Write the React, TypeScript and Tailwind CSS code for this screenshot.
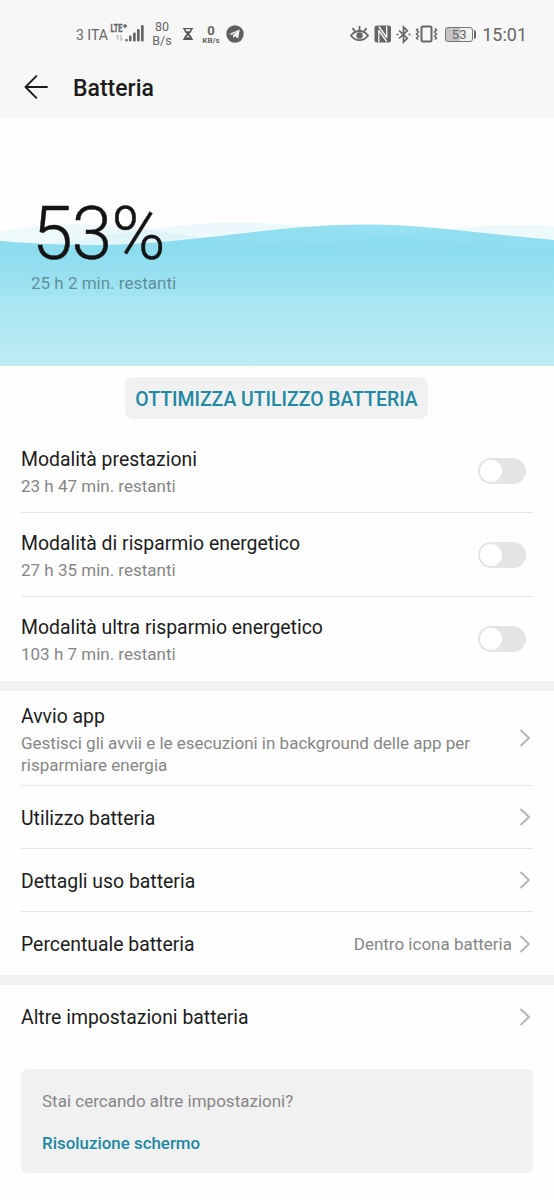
import React, { useState } from "react"

const StatusBar = () => {
  return (
    <div className="flex h-[58px] items-start justify-between pl-[76px] pr-[27px] text-[#666]">
      <div className="flex h-[58px] items-center pt-[10px]">
        <span className="w-[34px] whitespace-nowrap pt-px text-[14px] leading-none">3 ITA</span>
        <svg width="34" height="22" viewBox="0 0 34 22" className="-mt-[3px]" fill="#666">
          <path d="M13 4h4.200M15.100 1.900v4.200" stroke="#666" strokeWidth="1.400" />
          <text x="0.500" y="9.500" fontSize="10" fontWeight="700" fontFamily="Roboto, sans-serif" stroke="#666" strokeWidth="0.300" textLength="12" lengthAdjust="spacingAndGlyphs">
            LTE
          </text>
          <path d="M8 13v5M6.500 14.500L8 13M11 13v5l1.500-1.500" stroke="#bbb" strokeWidth="1.200" fill="none" />
          <rect x="15.300" y="17" width="2.500" height="2.500" rx="1" />
          <rect x="19" y="13.500" width="2.500" height="6" rx="1" />
          <rect x="23" y="10.500" width="2.700" height="9" rx="1" />
          <rect x="27" y="7" width="2.700" height="12.500" rx="1" />
          <rect x="31" y="3" width="2.700" height="16.500" rx="1" />
        </svg>
        <div className="ml-2 w-[20px] text-center text-[12.500px] leading-[14px]">
          <div>80</div>
          <div>B/s</div>
        </div>
        <svg width="10" height="12" viewBox="0 0 10 12" className="ml-[11px]" fill="#555">
          <path d="M0 0h10v1.300H9C9 4 7 5 6 6c1 1 3 2 3 4.700h1V12H0v-1.300h1C1 8 3 7 4 6 3 5 1 4 1 1.300H0z" />
          <path d="M2.300 1.300h5.400L6.800 3.300H3.200zM5 7.400L7 9.300H3z" fill="#f7f7f7" />
        </svg>
        <div className="ml-[8px] flex w-[20px] flex-col items-center font-bold">
          <span className="text-[13px] leading-[13px]">0</span>
          <span className="text-[8px] leading-[8px]">KB/s</span>
        </div>
        <svg width="18" height="18" viewBox="0 0 18 18" className="ml-[5px]">
          <circle cx="9" cy="9" r="8.700" fill="#5f5f5f" />
          <path d="M3.300 8.900L13.800 4.600 12.100 13.600 9 11.300 7.400 13 7 10.300 11.600 6.300 6 9.800z" fill="#f7f7f7" />
        </svg>
      </div>
      <div className="flex h-[58px] items-center pt-[10px]">
        <svg width="19" height="18" viewBox="0 0 19 18" fill="none" stroke="#666" strokeWidth="1.800">
          <path d="M1 10.500C4 6.800 7 6 9.500 6s5.500.8 8.500 4.500c-2.500 3.500-5.500 4.700-8.500 4.700S3.500 14 1 10.500z" />
          <path d="M9.500 1v4M2.500 3l2.500 3.500M16.500 3L14 6.500" />
          <circle cx="9.500" cy="10.500" r="3.200" fill="#666" stroke="none" />
        </svg>
        <svg width="18" height="18" viewBox="0 0 18 18" className="ml-[5px]">
          <rect x="0.500" y="0.500" width="16.500" height="17" rx="2.500" fill="#666" />
          <path d="M4.800 17V5M12.700 13V1" fill="none" stroke="#f7f7f7" strokeWidth="1.300" />
          <path d="M4.800 1.500L12.700 12.500M4.800 5.500L12.700 16.500" stroke="#f7f7f7" strokeWidth="1.300" />
        </svg>
        <svg width="15" height="19" viewBox="0 0 15 19" className="ml-[4px]" fill="none" stroke="#666" strokeWidth="1.700">
          <path d="M3 5.500l8.300 7.700L7.500 17V2l3.800 3.800L3 13.500" />
          <path d="M0.500 9.500h2M12.500 9.500h2" />
        </svg>
        <svg width="23" height="18" viewBox="0 0 23 18" className="ml-[4px]" fill="none" stroke="#666">
          <rect x="6.500" y="1.500" width="10" height="15" rx="1.500" strokeWidth="2" />
          <path d="M3 3.500L1.500 5 3.500 7 1.500 9l2 2-2 2L3 14.500M20 3.500L21.500 5l-2 2 2 2-2 2 2 2-1.500 1.500" strokeWidth="1.500" />
        </svg>
        <div className="ml-[7px] flex h-[15px] w-[28px] items-center justify-center rounded-[3px] border border-[#777] bg-linear-to-r from-[#c4c4c4] from-53% to-[#f0f0f0] to-53% text-[13px] leading-none">
          53
        </div>
        <div className="ml-px h-[9px] w-[2px] rounded-r-sm bg-[#666]" />
        <span className="ml-[6px] pt-px text-[18px] leading-none">15:01</span>
      </div>
    </div>
  )
}

const Header = () => {
  return (
    <div className="h-[118px] bg-[#f7f7f7]">
      <StatusBar />
      <div className="flex h-[60px] items-center pl-6">
        <svg width="25" height="24" viewBox="0 0 25 24" className="-mt-[2px]" fill="none" stroke="#1a1a1a" strokeWidth="1.900" strokeLinecap="round" strokeLinejoin="round">
          <path d="M1.500 12H23M12.300 1.200L1.500 12l10.800 10.800" />
        </svg>
        <h1 className="ml-6 text-[23px] font-medium leading-none">Batteria</h1>
      </div>
    </div>
  )
}

const BatteryLevel = () => {
  return (
    <div className="relative h-[248px] overflow-hidden">
      <svg className="absolute inset-0" width="554" height="248" viewBox="0 118 554 248">
        <defs>
          <linearGradient id="water" gradientUnits="userSpaceOnUse" x1="0" y1="224" x2="0" y2="366">
            <stop offset="0" stopColor="#98e1f2" />
            <stop offset="0.180" stopColor="#92dff0" />
            <stop offset="1" stopColor="#c0edf4" />
          </linearGradient>
          <linearGradient id="swell" gradientUnits="userSpaceOnUse" x1="0" y1="224" x2="0" y2="300">
            <stop offset="0" stopColor="#6fd0e0" stopOpacity="0.130" />
            <stop offset="0.300" stopColor="#6fd0e8" stopOpacity="0.100" />
            <stop offset="1" stopColor="#6fd0e8" stopOpacity="0" />
          </linearGradient>
        </defs>
        <path d="M0 240.700C30 243.500 60 245 93 245C190 245 270 224.500 365 224.500C430 224.500 490 235 554 240V366H0z" fill="url(#water)" />
        <path d="M0 231.500C25 227 52 224.500 80 224.500C150 224.500 215 245 290 245C370 245 440 225 515 225C530 225 542 225.500 554 226.500V366H0z" fill="url(#swell)" />
        <path d="M0 246C80 246 150 222.500 235 222.500C330 222.500 430 248 554 248V366H0z" fill="url(#swell)" />
      </svg>
      <div className="relative pl-[31px] pt-[79px]">
        <div className="pl-px text-[73.500px] font-light leading-[74px] tracking-[-1.200px] text-[#141414] [-webkit-text-stroke:0.400px_#141414]">53%</div>
        <div className="mt-[2px] text-[17px] leading-5 text-[#5f9099]">25 h 2 min. restanti</div>
      </div>
    </div>
  )
}

const Toggle = ({ on, onClick }: { on: boolean; onClick: () => void }) => {
  return (
    <button
      role="switch"
      aria-checked={on}
      onClick={onClick}
      className={`mr-[7px] flex h-[26px] w-12 items-center rounded-full px-[2px] ${on ? "justify-end bg-[#1f86a0]" : "bg-[#e4e4e4]"}`}
    >
      <span className="size-[22px] rounded-full bg-white" />
    </button>
  )
}

const Chevron = () => (
  <svg width="12" height="18" viewBox="0 0 12 18" className="mr-[2px] shrink-0" fill="none" stroke="#b3b3b3" strokeWidth="1.800">
    <path d="M1.500 1L10 9l-8.500 8" />
  </svg>
)

const modes = [
  { title: "Modalità prestazioni", left: "23 h 47 min. restanti" },
  { title: "Modalità di risparmio energetico", left: "27 h 35 min. restanti" },
  { title: "Modalità ultra risparmio energetico", left: "103 h 7 min. restanti" },
]

const links = [
  { title: "Utilizzo batteria", value: "" },
  { title: "Dettagli uso batteria", value: "" },
  { title: "Percentuale batteria", value: "Dentro icona batteria" },
]

const App = () => {
  const [active, setActive] = useState<number | null>(null)

  return (
    <div className="h-[1200px] w-[554px] overflow-hidden bg-[#fefefe] font-[Roboto,sans-serif] text-[#1c1c1c]">
      <Header />
      <BatteryLevel />

      <div className="flex pl-[125px] pt-[11px]">
        <button className="h-[42px] w-[303px] whitespace-nowrap rounded-lg bg-[#f1f1f1] pt-[3px] text-[19.400px] font-medium text-[#2088a2]">
          OTTIMIZZA UTILIZZO BATTERIA
        </button>
      </div>

      {/* Power modes */}
      <div className="mt-[10px] px-[21px]">
        {modes.map((mode, i) => (
          <div key={mode.title} className="flex h-[84px] items-center justify-between border-b border-[#e6e6e6] last:border-b-0">
            <div className="pt-[2px]">
              <div className="pt-px text-[19.400px] leading-[27px]">{mode.title}</div>
              <div className="text-[17px] leading-[26px] text-[#868686]">{mode.left}</div>
            </div>
            <Toggle on={active === i} onClick={() => setActive(active === i ? null : i)} />
          </div>
        ))}
      </div>
      <div className="h-[10px] bg-[#f2f2f2]" />

      <div className="px-[21px]">
        <div className="flex h-[95px] items-center justify-between border-b border-[#e6e6e6]">
          <div className="pt-[2px]">
            <div className="pb-px text-[19.400px] leading-7">Avvio app</div>
            <div className="w-[470px] text-[17px] leading-[22px] text-[#868686]">
              Gestisci gli avvii e le esecuzioni in background delle app per risparmiare energia
            </div>
          </div>
          <Chevron />
        </div>
        {links.map((link) => (
          <div key={link.title} className="flex h-[63px] items-center border-b border-[#e6e6e6] last:border-b-0">
            <div className="flex-1 pt-[3px] text-[19.400px]">{link.title}</div>
            <div className="mr-[7px] pt-[2px] text-[17px] text-[#868686]">{link.value}</div>
            <Chevron />
          </div>
        ))}
      </div>
      <div className="h-[10px] bg-[#f2f2f2]" />

      <div className="flex h-16 items-center justify-between px-[21px]">
        <div className="pt-[2px] text-[19.400px]">Altre impostazioni batteria</div>
        <Chevron />
      </div>

      <div className="mx-[21px] mt-5 h-[104px] rounded-md bg-[#f1f1f1] px-[21px] pt-[21px]">
        <div className="text-[17px] leading-[22px] text-[#868686]">Stai cercando altre impostazioni?</div>
        <div className="mt-5 text-[16.900px] font-medium leading-[22px] text-[#2088a2]">Risoluzione schermo</div>
      </div>
    </div>
  )
}

export default App
